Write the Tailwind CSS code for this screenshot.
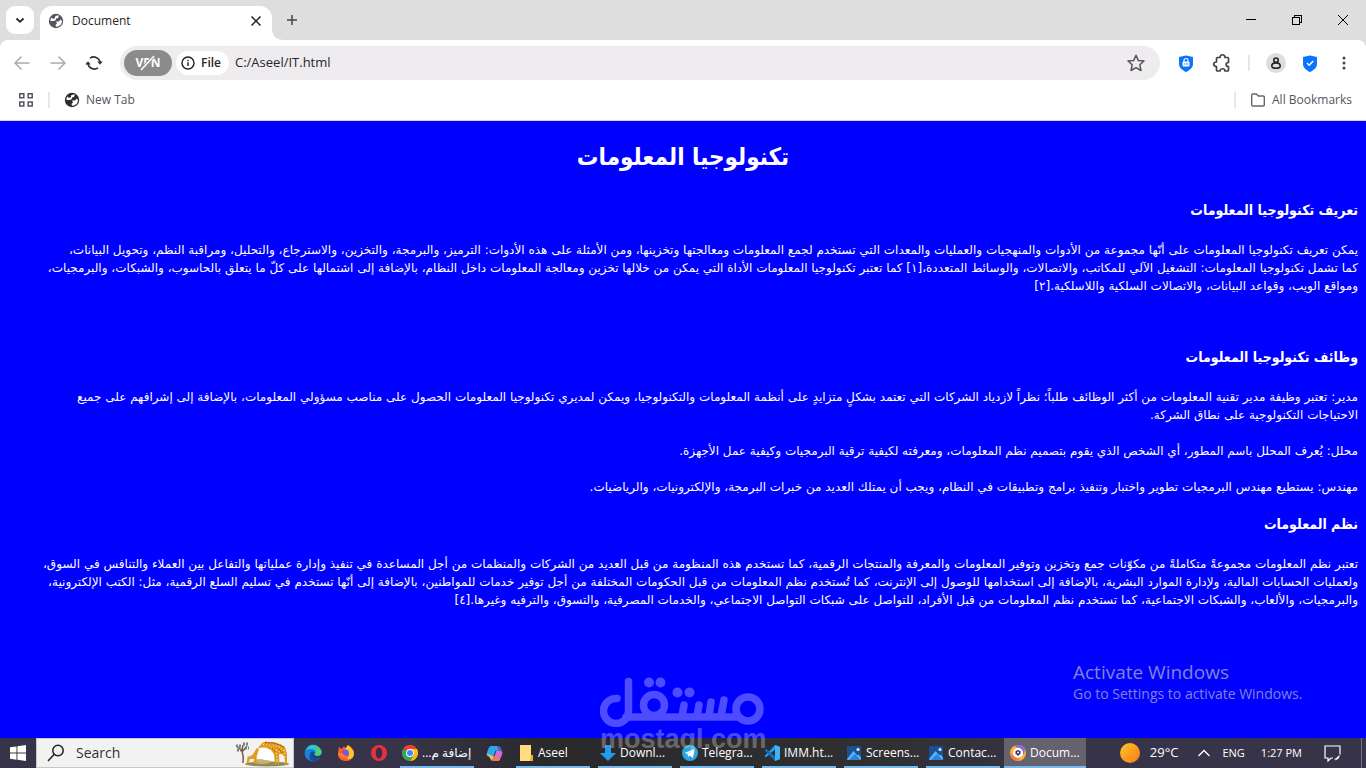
<!DOCTYPE html>
<html lang="en">
<head>
<meta charset="utf-8">
<meta name="viewport" content="width=device-width, initial-scale=1">
<title>Document</title>
<script src="https://cdn.jsdelivr.net/npm/@tailwindcss/browser@4"></script>
</head>
<body class="flex h-screen flex-col overflow-hidden bg-white font-['Open_Sans','Noto_Sans',sans-serif] text-xs text-[#27272a]">
<svg class="hidden" aria-hidden="true">
  <symbol id="globe" viewBox="0 0 16 16"><circle cx="8" cy="8" r="7.2" fill="currentColor"/><path d="M7 3.500Q9 2 11 2.600L10 5 8 5.500 7.500 7.500 5 8H2.500Q2 6 3.500 4.500L5 6l2-1Z" fill="#fff"/><path d="M8 8.500h3l1.500-2 1.500 1.500Q14 12 10 13.500L8 13.800 7.500 12 9 10.500Z" fill="#fff"/></symbol>
  <symbol id="photo" viewBox="0 0 16 16"><rect width="14" height="14" x="1" y="1" rx="1" fill="#1c4f93"/><path d="M1 14 7.500 6l4 4.500 1-1 2.500 3V14q0 1-1 1H2q-1 0-1-1Z" fill="#55b5f5"/><path d="m3 15 6-6 5.500 6Z" fill="#2c82d8"/><circle cx="12" cy="4.500" r="1.500" fill="#d8efff"/></symbol>
</svg>

<header class="shrink-0">
  <div class="flex h-10 items-end bg-[#dedede] pl-1.5">
    <button aria-label="Search tabs" class="mb-1.5 flex h-7 w-7 items-center justify-center rounded-[9px] bg-white"><svg class="h-3 w-3" viewBox="0 0 12 12" fill="none" stroke="#222" stroke-width="1.8"><path d="m2.500 4.500 3.500 3.300 3.500-3.300"/></svg></button>
    <div class="ml-1.5 flex h-[34px] w-58 items-center rounded-t-xl bg-white pr-2.5 pb-1 pl-2">
      <svg class="h-4 w-4 text-[#55555f]"><use href="#globe"/></svg>
      <span class="ml-2 flex-1">Document</span>
      <button aria-label="Close tab"><svg class="h-3 w-3" viewBox="0 0 12 12" stroke="#222" stroke-width="1.500"><path d="m1.500 1.500 9 9m0-9-9 9"/></svg></button>
    </div>
    <svg class="h-3 w-3 shrink-0" viewBox="0 0 12 12"><path d="M0 0Q0 12 12 12H0Z" fill="#fff"/></svg>
    <button aria-label="New tab" class="mb-3.5 ml-0.5"><svg class="h-3 w-3" viewBox="0 0 12 12" stroke="#444" stroke-width="1.500"><path d="M6 1v10M1 6h10"/></svg></button>
    <div class="mb-3.5 ml-auto flex items-center gap-[34px] pr-[17px]">
      <button aria-label="Minimize"><svg class="h-3 w-3" viewBox="0 0 12 12" stroke="#000" shape-rendering="crispEdges"><path d="M1 5.500h10"/></svg></button>
      <button aria-label="Restore"><svg class="h-3 w-3" viewBox="0 0 12 12" fill="none" stroke="#000" shape-rendering="crispEdges"><path d="M1.500 3.500h7v7h-7zM3.500 3.500v-2h7v7h-2"/></svg></button>
      <button aria-label="Close"><svg class="h-3 w-3" viewBox="0 0 12 12" stroke="#000"><path d="m1 1 10 10m0-10L1 11"/></svg></button>
    </div>
  </div>

  <div class="bg-[#dedede]">
  <div class="flex h-[46px] items-center rounded-t-lg bg-white pr-3.5 pl-3.5">
    <div class="flex items-center gap-5">
      <button aria-label="Back"><svg class="h-4 w-4" viewBox="0 0 16 16" fill="none" stroke="#aaa" stroke-width="1.500"><path d="M15.500 8H1M7.500 1.500 1 8l6.500 6.500"/></svg></button>
      <button aria-label="Forward"><svg class="h-4 w-4" viewBox="0 0 16 16" fill="none" stroke="#aaa" stroke-width="1.500"><path d="M.5 8H15M8.500 1.500 15 8l-6.500 6.500"/></svg></button>
      <button aria-label="Reload"><svg class="h-4 w-4 overflow-visible" viewBox="0 0 16 16" fill="none" stroke="#333" stroke-width="1.600"><path d="M4 3.200a6.300 6.300 0 0 1 10 4M12 12.800a6.300 6.300 0 0 1-10-4"/><path d="M11.200 6.500h5.600L14 9.700ZM-.8 9.500h5.600L2 6.300Z" fill="#333" stroke="none"/></svg></button>
    </div>
    <div class="ml-[18px] flex h-[34px] flex-1 items-center rounded-full bg-[#eeecee] pr-[15px] pl-1">
      <button aria-label="VPN is off" class="flex h-[26px] w-12 items-center justify-center rounded-full bg-[#8b8b8b]"><svg class="h-4 w-7" viewBox="0 0 28 16"><text x="14" y="12" text-anchor="middle" fill="#fff" font-size="12" font-weight="700" font-family="Open Sans">VPN</text><path d="M7 15 20 1" stroke="#8b8b8b" stroke-width="3"/><path d="M7 15 20 1" stroke="#fff" stroke-width="1.500"/></svg></button>
      <button class="ml-1 flex h-6 items-center gap-1.5 rounded-full bg-white pr-2 pl-[5px] font-semibold"><svg class="h-3.5 w-3.5" viewBox="0 0 14 14" fill="none" stroke="#222" stroke-width="1.400"><circle cx="7" cy="7" r="6"/><path d="M7 6.200V10M7 3.800v1.400"/></svg>File</button>
      <input aria-label="Address" value="C:/Aseel/IT.html" class="ml-1.5 min-w-0 flex-1 bg-transparent text-[13px] outline-none">
      <button aria-label="Bookmark this page"><svg class="h-[18px] w-[18px]" viewBox="0 0 18 18" fill="none" stroke="#555" stroke-width="1.500" stroke-linejoin="round"><path d="m9 1.300 2.300 5.100 5.700.6-4.200 3.800 1.200 5.700L9 13.700l-5 2.800 1.200-5.700L1 7l5.700-.6Z"/></svg></button>
    </div>
    <div class="flex items-center pl-[18px]">
      <button aria-label="Tracker protection"><svg class="h-[17px] w-4" viewBox="0 0 16 17"><path d="M8 .5 15 2v7c0 4-4 6.500-7 8-3-1.500-7-4-7-8V2Z" fill="#0a73ff"/><path d="M6 7V5.500a2 2 0 0 1 4 0V7" fill="none" stroke="#fff" stroke-width="1.200"/><rect x="4.500" y="6.500" width="7" height="5" rx="1" fill="#fff"/><path d="M6 9h1m1 0h2" stroke="#0a73ff"/></svg></button>
      <button aria-label="Extensions" class="ml-[18px]"><svg class="h-5 w-5" viewBox="0 0 20 20" fill="none" stroke="#444" stroke-width="1.700" stroke-linejoin="round"><path d="M5.500 4.500H8c0-3.700 5-3.700 5 0h2.500q1 0 1 1V9.500c-3.200 0-3.200 4 0 4V17q0 1-1 1H13c0-3-5-3-5 0H5.500q-1 0-1-1v-3.500c-3.700 0-3.700-4.500 0-4.500V5.500q0-1 1-1Z"/></svg></button>
      <span class="ml-4 h-4 w-0.5 bg-[#e5e5e5]"></span>
      <button aria-label="Profile" class="ml-4 flex h-5 w-5 items-center justify-center rounded-full bg-[#dedede]"><svg class="h-3 w-3" viewBox="0 0 12 12" fill="none" stroke="#222" stroke-width="1.600"><circle cx="6" cy="3.200" r="2.200"/><path d="M1.800 9c0-4.200 8.400-4.200 8.400 0 0 3-8.400 3-8.400 0Z"/></svg></button>
      <button aria-label="Security" class="ml-4"><svg class="h-[17px] w-4" viewBox="0 0 16 17"><path d="M8 .5 15 2v7c0 4-4 6.500-7 8-3-1.500-7-4-7-8V2Z" fill="#0a73ff"/><path d="m5 8 2.200 2.200L11.200 6" fill="none" stroke="#fff" stroke-width="1.600"/></svg></button>
      <button aria-label="Menu" class="ml-[18px]"><svg class="h-4 w-4" viewBox="0 0 16 16" fill="#444"><circle cx="8" cy="3" r="1.500"/><circle cx="8" cy="8" r="1.500"/><circle cx="8" cy="13" r="1.500"/></svg></button>
    </div>
  </div>
  </div>

  <nav aria-label="Bookmarks" class="flex h-[35px] items-center border-b border-[#d8d8d8] pr-3.5 pb-1.5 pl-[18px] text-[#55555a]">
    <button aria-label="Tab groups"><svg class="h-4 w-4" viewBox="0 0 16 16" fill="none" stroke="#55555f" stroke-width="1.500"><path d="M1.800 1.800h4v4h-4zM10.200 1.800h4v4h-4zM1.800 10h4v4h-4zM10.200 10h4v4h-4z"/></svg></button>
    <span class="ml-3.5 h-4 w-0.5 bg-[#e8e8e8]"></span>
    <a href="#" class="ml-3.5 flex items-center gap-1.5"><svg class="h-4 w-4 text-[#2c2c30]"><use href="#globe"/></svg>New Tab</a>
    <span class="ml-auto h-4 w-0.5 bg-[#e8e8e8]"></span>
    <button class="ml-3.5 flex items-center gap-1.5"><svg class="h-4 w-4" viewBox="0 0 16 16" fill="none" stroke="#66666c" stroke-width="1.400" stroke-linejoin="round"><path d="M1.700 13V3q0-1 1-1h3.600l2 2h5q1 0 1 1v8q0 1-1 1H2.700q-1 0-1-1Z"/></svg>All Bookmarks</button>
  </nav>
</header>

<main dir="rtl" lang="ar" class="min-h-0 flex-1 overflow-hidden bg-[#0000ff] px-2 font-['DejaVu_Sans',sans-serif] text-xs leading-[18px] whitespace-nowrap text-white">
  <h1 class="mt-[18px] text-center font-['DejaVu_Sans_Condensed','DejaVu_Sans',sans-serif] text-2xl leading-9 font-bold">تكنولوجيا المعلومات</h1>
  <h3 class="mt-[25px] font-['DejaVu_Sans_Condensed','DejaVu_Sans',sans-serif] text-sm leading-5 font-bold">تعريف تكنولوجيا المعلومات</h3>
  <p class="mt-[21px]">يمكن تعريف تكنولوجيا المعلومات على أنّها مجموعة من الأدوات والمنهجيات والعمليات والمعدات التي تستخدم لجمع المعلومات ومعالجتها وتخزينها، ومن الأمثلة على هذه الأدوات: الترميز، والبرمجة، والتخزين، والاسترجاع، والتحليل، ومراقبة النظم، وتحويل البيانات،<br>كما تشمل تكنولوجيا المعلومات: التشغيل الآلي للمكاتب، والاتصالات، والوسائط المتعددة،[١] كما تعتبر تكنولوجيا المعلومات الأداة التي يمكن من خلالها تخزين ومعالجة المعلومات داخل النظام، بالإضافة إلى اشتمالها على كلّ ما يتعلق بالحاسوب، والشبكات، والبرمجيات،<br>ومواقع الويب، وقواعد البيانات، والاتصالات السلكية واللاسلكية.[٢]</p>
  <h3 class="mt-[52px] font-['DejaVu_Sans_Condensed','DejaVu_Sans',sans-serif] text-sm leading-5 font-bold">وظائف تكنولوجيا المعلومات</h3>
  <p class="mt-[21px]">مدير: تعتبر وظيفة مدير تقنية المعلومات من أكثر الوظائف طلباً؛ نظراً لازدياد الشركات التي تعتمد بشكلٍ متزايدٍ على أنظمة المعلومات والتكنولوجيا، ويمكن لمديري تكنولوجيا المعلومات الحصول على مناصب مسؤولي المعلومات، بالإضافة إلى إشرافهم على جميع<br>الاحتياجات التكنولوجية على نطاق الشركة.</p>
  <p class="mt-[18px]">محلل: يُعرف المحلل باسم المطور، أي الشخص الذي يقوم بتصميم نظم المعلومات، ومعرفته لكيفية ترقية البرمجيات وكيفية عمل الأجهزة.</p>
  <p class="mt-[18px]">مهندس: يستطيع مهندس البرمجيات تطوير واختبار وتنفيذ برامج وتطبيقات في النظام، ويجب أن يمتلك العديد من خبرات البرمجة، والإلكترونيات، والرياضيات.</p>
  <h3 class="mt-[18px] font-['DejaVu_Sans_Condensed','DejaVu_Sans',sans-serif] text-sm leading-5 font-bold">نظم المعلومات</h3>
  <p class="mt-[21px]">تعتبر نظم المعلومات مجموعةً متكاملةً من مكوّنات جمع وتخزين وتوفير المعلومات والمعرفة والمنتجات الرقمية، كما تستخدم هذه المنظومة من قبل العديد من الشركات والمنظمات من أجل المساعدة في تنفيذ وإدارة عملياتها والتفاعل بين العملاء والتنافس في السوق،<br>ولعمليات الحسابات المالية، ولإدارة الموارد البشرية، بالإضافة إلى استخدامها للوصول إلى الإنترنت، كما تُستخدم نظم المعلومات من قبل الحكومات المختلفة من أجل توفير خدمات للمواطنين، بالإضافة إلى أنّها تستخدم في تسليم السلع الرقمية، مثل: الكتب الإلكترونية،<br>والبرمجيات، والألعاب، والشبكات الاجتماعية، كما تستخدم نظم المعلومات من قبل الأفراد، للتواصل على شبكات التواصل الاجتماعي، والخدمات المصرفية، والتسوق، والترفيه وغيرها.[٤]</p>
</main>

<footer class="relative flex h-[30px] shrink-0 items-center bg-[linear-gradient(90deg,#373348_0%,#373348_30%,#29292c_40%,#303033_65%,#37344a_80%,#37344a_100%)] text-white">
  <button aria-label="Start" class="flex h-full w-9 items-center justify-center"><svg class="h-4 w-4" viewBox="0 0 16 16" fill="#fff"><path d="M0 2.300 6.500 1.400v6.200H0ZM7.400 1.300 16 0v7.600H7.400ZM0 8.500h6.500v6.200L0 13.800ZM7.400 8.500H16V16l-8.600-1.200Z"/></svg></button>
  <div class="flex h-full w-[258px] items-center border border-[#c8c8c8] bg-[#f2f2f2] pr-0.5 pl-2.5 text-[#333]">
    <svg class="h-[18px] w-[18px] shrink-0" viewBox="0 0 18 18" fill="none" stroke="#222" stroke-width="1.500"><circle cx="11" cy="6.500" r="5.200"/><path d="M7.300 10.300 1 17"/></svg>
    <input aria-label="Search" placeholder="Search" class="ml-[11px] min-w-0 flex-1 bg-transparent text-sm placeholder-[#333] outline-none">
    <svg class="h-7 w-14 shrink-0" viewBox="0 0 56 28"><ellipse cx="32" cy="25" rx="22" ry="2.400" fill="#8d8b52"/><ellipse cx="27" cy="22.500" rx="9" ry="2.500" fill="#c8b070"/><path d="M22 19q0-8 5-10l9 2 4 7v4l-10-1Z" fill="#fff"/><path d="M8 24q1-6-1-12L3 8m4 5 5-6M7 11 8 6" fill="none" stroke="#795c43" stroke-width="1.500"/><path d="M1 7h5m2-2h5M2 11h4m4-2h4" stroke="#718477" stroke-width="3" stroke-dasharray="2 1"/><path d="m23 9 4-5 3-1 1-1 1 1h7l7 2.500L50 8l2 7v11h-1.700L49.500 18 47 15h-3l.5 10.500H43L42 17l-.5 8.500H40L39 15l-3-4-5-2.500h-4Z" fill="#e19a1c"/><path d="m20 12 2-3 2 1-1 3-1.500 5 .5 7h-1.500L19 20h-4l-2 5h-1.500l1-7 5-2Z" fill="#e19a1c"/><path d="m28 5.500 6 .5 5 4 6 3m-7-7 7 2 4 4m-8-1 1 8m7-8 1 7" fill="none" stroke="#fff1a2" stroke-dasharray="1 2"/><path d="m30 3.500 8 .5 7 2 5 3M37 9l4 4m3-3 3 4" fill="none" stroke="#99540b" stroke-dasharray="2 1"/></svg>
  </div>
  <button aria-label="Edge" class="ml-2.5"><svg class="h-[18px] w-[18px]" viewBox="0 0 18 18"><circle cx="9" cy="9" r="8.500" fill="#1684d8"/><path d="M2 6Q6-1 13 2q6 4 4 8-2 3-6 1 2-6-4-6-3 0-5 1Z" fill="#39c4c5"/><path d="M12 2q7 3 5 8-2 3-6 1 3-4 1-9Z" fill="#50d36b"/><path d="M6 10q1-4 4-2-2 4 2 6 3 1 4-1-3 5-8 4-4-2-2-7Z" fill="#144f9b"/><path d="M11 8q-3 3 1 4 3 1 5-1v2q-4 2-7 0-3-3 1-5Z" fill="#333149"/></svg></button>
  <button aria-label="Firefox" class="ml-[15px]"><svg class="h-[18px] w-[18px]" viewBox="0 0 18 18"><path d="M1 8 2 3l3 2 2-3 2 3 2-4q7 4 6 10-2 6-8 6T1 12Z" fill="#ff5a2f"/><path d="M8 5 11 1q8 6 5 12-3 3-6 2 4-5-2-10Z" fill="#ffc52f"/><circle cx="8.500" cy="9" r="3.500" fill="#7957dd"/><path d="M1 10q4-3 6 1 3 2 5 0-1 4-5 3-4 0-6-4" fill="#ff7b2e"/></svg></button>
  <button aria-label="Opera" class="ml-[15px]"><svg class="h-[18px] w-[18px]" viewBox="0 0 18 18"><circle cx="9" cy="9" r="8" fill="#eb303d"/><ellipse cx="9" cy="9" rx="3.300" ry="5.500" fill="#343047"/></svg></button>

  <button class="ml-3 flex h-full w-[74px] items-center gap-1 border-b-2 border-[#76b9ed] px-0.5 pt-0.5"><svg class="h-4 w-4 shrink-0" viewBox="0 0 16 16"><path d="M8 8 1 4a8 8 0 0 1 14 0Z" fill="#ea4335"/><path d="M8 8 1 4a8 8 0 0 0 7 12l4-6Z" fill="#34a853"/><path d="M8 16a8 8 0 0 0 7-12H8l4 6Z" fill="#fbbc05"/><circle cx="8" cy="8" r="4" fill="#fff"/><circle cx="8" cy="8" r="3" fill="#4285f4"/></svg><span dir="rtl" class="whitespace-nowrap font-['Open_Sans','DejaVu_Sans'] text-xs">إضافة م...</span></button>
  <button aria-label="Copilot" class="ml-3"><svg class="h-[17px] w-[17px]" viewBox="0 0 18 18"><path d="M5 1h7l2 5h-4L8 12H2q-2-1-1-4l2-5q1-2 2-2Z" fill="#29a8ee"/><path d="M13 17H7l-2-5h4l2-6h5q2 1 1 4l-2 5q-1 2-2 2Z" fill="#db69d4"/><path d="m1 9 7 3-2 5-3-5H2Z" fill="#e9c33d"/><path d="m12 1 2 5 3 1q0-3-3-6Z" fill="#555ed5"/><path d="m7 17 2-5h5l-1 5Z" fill="#f47657"/></svg></button>
  <div class="ml-[13px] flex h-full gap-2 whitespace-nowrap">
    <button class="flex w-[74px] items-center gap-1 border-b-2 border-[#76b9ed] pt-0.5 pl-1"><svg class="h-4 w-3.5 shrink-0" viewBox="0 0 14 16"><path d="M0 0h11v10h2v6H0Z" fill="#ffdc7d"/><path d="M11 10h2v6h-3Z" fill="#eab32d"/></svg>Aseel</button>
    <button class="flex w-[74px] items-center gap-1 border-b-2 border-[#76b9ed] pt-0.5 pl-0.5"><svg class="h-4 w-4 shrink-0" viewBox="0 0 16 16"><path d="M5 0h6v8h5l-8 8-8-8h5Z" fill="#249bef"/></svg>Downl...</button>
    <button class="flex w-[74px] items-center gap-1 border-b-2 border-[#76b9ed] pt-0.5 pl-0.5"><svg class="h-4 w-4 shrink-0" viewBox="0 0 16 16"><circle cx="8" cy="8" r="8" fill="#2aa5df"/><path d="m2.500 8 10-4-1.500 9-3.500-2.600L6 12l-.5-3L10 6 5 8.800Z" fill="#fff"/></svg>Telegra...</button>
    <button class="flex w-[74px] items-center gap-1 border-b-2 border-[#76b9ed] pt-0.5 pl-0.5"><svg class="h-4 w-4 shrink-0" viewBox="0 0 16 16"><path d="m11 0 5 2v12l-5 2V4.500L2 12.300.5 11l9-9.300Z" fill="#279cee"/><path d="m.5 5 1.500-1.300 9 7.500V16L.5 5Z" fill="#126fc0"/><path d="m11 0 5 2v12l-5 2Z" fill="#41b2f3"/></svg>IMM.ht...</button>
    <button class="flex w-[74px] items-center gap-1 border-b-2 border-[#76b9ed] pt-0.5 pl-0.5"><svg class="h-4 w-4 shrink-0"><use href="#photo"/></svg>Screens...</button>
    <button class="flex w-[74px] items-center gap-1 border-b-2 border-[#76b9ed] pt-0.5 pl-0.5"><svg class="h-4 w-4 shrink-0"><use href="#photo"/></svg>Contac...</button>
  </div>
  <button class="ml-1 flex h-full w-[82px] items-center gap-1 border-b-2 border-[#76b9ed] bg-[#65616e] pt-0.5 pl-1.5"><svg class="h-4 w-4 shrink-0" viewBox="0 0 16 16"><circle cx="8" cy="8" r="8" fill="#ffb532"/><path d="M4 1q6-3 11 3l-1 6-3-6Z" fill="#8868ed"/><path d="M0 8q1 7 8 8l3-4-7-1Z" fill="#f87844"/><circle cx="8" cy="8" r="5" fill="#fff"/><path d="m8 5 2.500 1v2.500L8 11 5.500 8.500V6Z" fill="#3b3548"/><circle cx="8" cy="7.500" r="1" fill="#fff"/></svg>Docum...</button>

  <div class="ml-auto flex h-full items-center whitespace-nowrap">
    <svg class="h-5 w-5" viewBox="0 0 20 20"><defs><linearGradient id="sun" x2="1" y2="1"><stop stop-color="#ffc62b"/><stop offset="1" stop-color="#f47b16"/></linearGradient></defs><circle cx="10" cy="10" r="10" fill="url(#sun)"/></svg>
    <span class="ml-2.5 text-[13px]">29°C</span>
    <button aria-label="Show hidden icons" class="ml-5"><svg class="h-3 w-3" viewBox="0 0 12 12" fill="none" stroke="#fff" stroke-width="1.300"><path d="m.5 9 5.500-5.500L11.500 9"/></svg></button>
    <span class="ml-3 text-[11px]">ENG</span>
    <span class="ml-4 text-[11px]">1:27 PM</span>
    <button aria-label="Notifications" class="ml-[22px]"><svg class="h-[17px] w-[17px]" viewBox="0 0 17 17" fill="none" stroke="#fff" stroke-width="1.200"><path d="M9 13H7l-3 3v-3H1V1h15v9"/><path d="M10 15q0-2 2-2l4-4q0 7-6 6Z" fill="#fff" stroke="#373348" stroke-width=".6"/></svg></button>
    <span class="ml-5 h-full w-px bg-[#777386]"></span><span class="w-1"></span>
  </div>
</footer>

<aside aria-label="Windows activation" class="pointer-events-none absolute right-[57px] bottom-16 w-[236px] whitespace-nowrap text-[#8084d8]">
  <div class="text-[19px] leading-6">Activate Windows</div>
  <div class="text-sm leading-5">Go to Settings to activate Windows.</div>
</aside>
<aside aria-label="Mostaql" class="pointer-events-none absolute bottom-[17px] left-1/2 w-[166px] -translate-x-1/2 text-white/30">
  <svg class="block h-[50px] w-41" viewBox="0 0 164 50" fill="none" aria-hidden="true">
    <g opacity=".3" stroke="#fff" fill="none" stroke-width="7.500" stroke-linecap="round"><path d="M17 21.500a12.500 12.500 0 1 0 11.500 13V4.500M26 40h110"/><circle cx="54" cy="28" r="10.500"/><circle cx="148" cy="32" r="12"/><path d="M82 39l2-11M97 39l2-11M109 39l2-14M121 39l3-16"/><path d="M49 5.500h.01M60.500 5.500h.01M77.500 15.500h.01M89.500 15.500h.01" stroke-width="10"/></g>
  </svg>
  <div class="font-['Liberation_Sans'] text-[27px] leading-6 font-bold">mostaql.com</div>
</aside>
</body>
</html>
